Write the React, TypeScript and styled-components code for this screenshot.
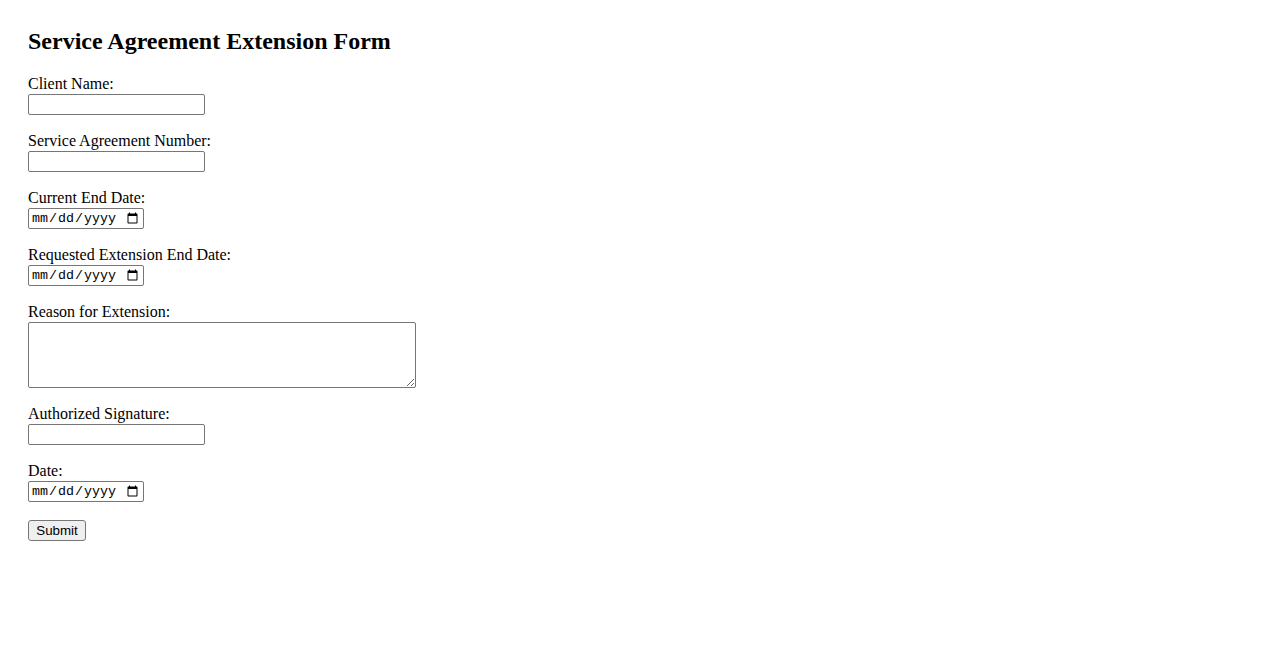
import React from "react";
import styled, { createGlobalStyle } from "styled-components";

const GlobalStyle = createGlobalStyle`
  body {
    margin: 8px;
    background: #ffffff;
    color: #000000;
    font-family: "Liberation Serif", "Times New Roman", serif;
    font-size: 16px;
  }
`;

const Page = styled.div`
  padding: 20px;
`;

const Title = styled.h2`
  margin: 0 0 21px;
  font-size: 24px;
  line-height: 27px;
  font-weight: bold;
`;

const Form = styled.form`
  display: flex;
  flex-direction: column;
  align-items: flex-start;
  gap: 18px;
`;

const Field = styled.div`
  display: flex;
  flex-direction: column;
  align-items: flex-start;
`;

const Label = styled.label`
  display: block;
  line-height: 16px;
  padding-bottom: 2px;
  font-size: 16px;
`;

const TextInput = styled.input<{ $w: number }>`
  box-sizing: border-box;
  width: ${(p) => p.$w}px;
  height: 21px;
  margin: 0;
  padding: 1px 2px;
  border: 1px solid #767676;
  border-radius: 2px;
  background: #ffffff;
  font-family: "Liberation Sans", Arial, sans-serif;
  font-size: 13.33px;
`;

const DateInput = styled(TextInput)`
  font-family: "Liberation Mono", "Courier New", monospace;
  color: #000;
`;

const TextArea = styled.textarea`
  box-sizing: border-box;
  width: 388px;
  height: 66px;
  margin: 0;
  padding: 2px;
  border: 1px solid #767676;
  border-radius: 2px;
  font-family: "Liberation Mono", monospace;
  font-size: 13.33px;
`;

const SubmitButton = styled.button`
  box-sizing: border-box;
  width: 58px;
  height: 21px;
  margin: 0;
  padding: 1px 6px;
  background: #efefef;
  border: 1px solid #767676;
  border-radius: 3px;
  color: #000;
  font-family: "Liberation Sans", Arial, sans-serif;
  font-size: 13.33px;
  line-height: 15px;
`;

export default function App() {
  return (
    <>
      <GlobalStyle />
      <Page>
        <Title>Service Agreement Extension Form</Title>
        <Form onSubmit={(e) => e.preventDefault()}>
          <Field>
            <Label htmlFor="client">Client Name:</Label>
            <TextInput id="client" type="text" $w={177} />
          </Field>
          <Field>
            <Label htmlFor="san">Service Agreement Number:</Label>
            <TextInput id="san" type="text" $w={177} />
          </Field>
          <Field>
            <Label htmlFor="ced">Current End Date:</Label>
            <DateInput id="ced" type="date" $w={116} />
          </Field>
          <Field>
            <Label htmlFor="red">Requested Extension End Date:</Label>
            <DateInput id="red" type="date" $w={116} />
          </Field>
          <Field>
            <Label htmlFor="reason">Reason for Extension:</Label>
            <TextArea id="reason" />
          </Field>
          <Field>
            <Label htmlFor="sig">Authorized Signature:</Label>
            <TextInput id="sig" type="text" $w={177} />
          </Field>
          <Field>
            <Label htmlFor="date">Date:</Label>
            <DateInput id="date" type="date" $w={116} />
          </Field>
          <SubmitButton type="submit">Submit</SubmitButton>
        </Form>
      </Page>
    </>
  );
}
